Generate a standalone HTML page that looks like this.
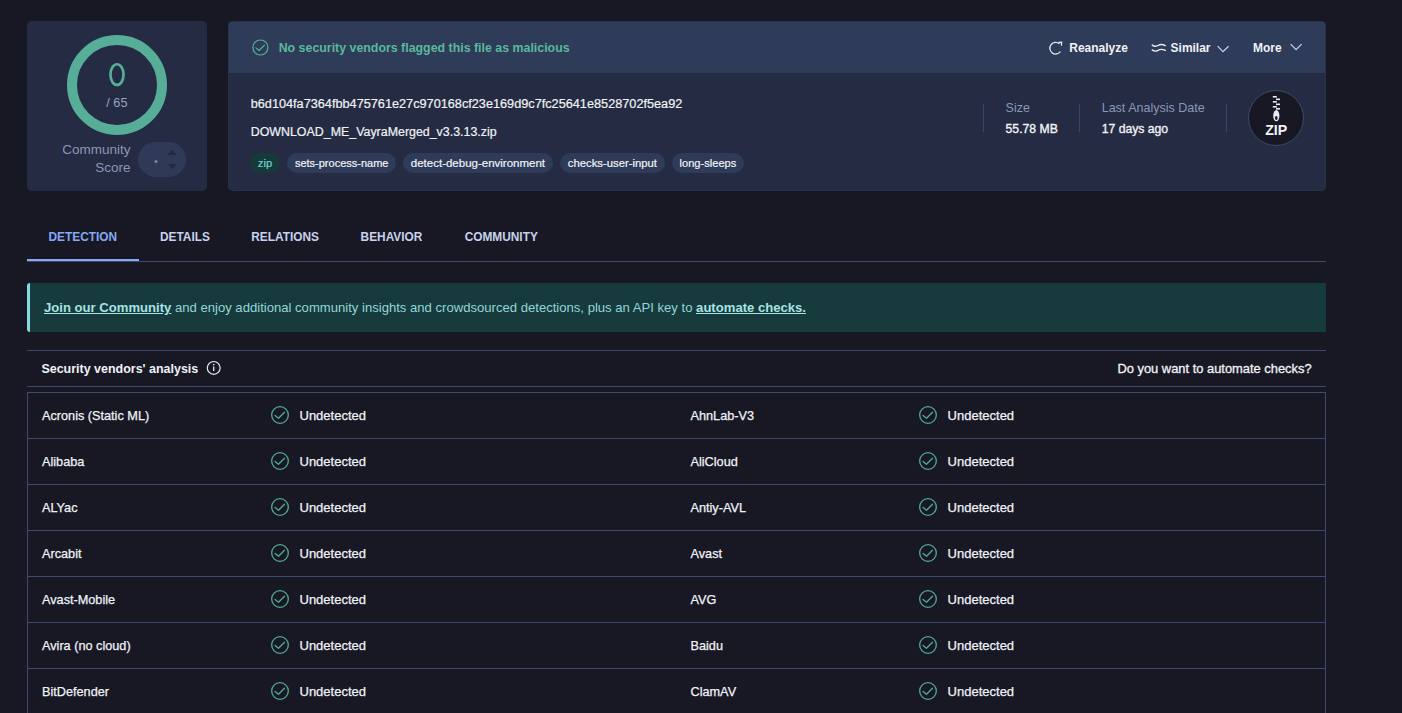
<!DOCTYPE html>
<html><head><meta charset="utf-8">
<style>
*{box-sizing:border-box;margin:0;padding:0}
html,body{width:1402px;height:713px;overflow:hidden;background:#181825;font-family:"Liberation Sans",sans-serif;color:#f0f2f6}
.t{position:absolute;white-space:nowrap}
.b{position:absolute}
svg.full{position:absolute;left:0;top:0}
</style></head><body>
<div class="b" style="left:27px;top:21px;width:180px;height:170px;background:#242b42;border-radius:5px"></div>
<div class="b" style="left:228px;top:21px;width:1098px;height:170px;background:#242b42;border-radius:5px;overflow:hidden;box-shadow:inset 0 0 0 1px #29324b"><div class="b" style="left:1px;top:1px;width:1096px;height:51px;background:#2e3b59"></div></div>
<div class="b" style="left:138px;top:142px;width:48px;height:35px;border-radius:17.5px;background:#2e3a58"></div>
<div class="b" style="left:27px;top:283px;width:1299px;height:49px;background:#173a3d;border-left:3px solid #86d9e0;border-radius:3px 0 0 3px"></div>
<div class="b" style="left:27px;top:261px;width:1299px;height:1px;background:#3d4a6b"></div>
<div class="b" style="left:27px;top:259px;width:112px;height:2px;background:#86a8f5"></div>
<div class="b" style="left:27px;top:350px;width:1299px;height:1px;background:#3d4a6b"></div>
<div class="b" style="left:27px;top:386px;width:1299px;height:1px;background:#3d4a6b"></div>
<div class="b" style="left:27px;top:392px;width:1299px;height:330px;border:1px solid #3d4a6b"></div>
<div class="b" style="left:27px;top:438px;width:1299px;height:1px;background:#3d4a6b"></div>
<div class="b" style="left:27px;top:484px;width:1299px;height:1px;background:#3d4a6b"></div>
<div class="b" style="left:27px;top:530px;width:1299px;height:1px;background:#3d4a6b"></div>
<div class="b" style="left:27px;top:576px;width:1299px;height:1px;background:#3d4a6b"></div>
<div class="b" style="left:27px;top:622px;width:1299px;height:1px;background:#3d4a6b"></div>
<div class="b" style="left:27px;top:668px;width:1299px;height:1px;background:#3d4a6b"></div>
<div class="b" style="left:27px;top:714px;width:1299px;height:1px;background:#3d4a6b"></div>
<svg class="full" width="1402" height="713" viewBox="0 0 1402 713"><circle cx="280" cy="415" r="8.32" fill="none" stroke="#52a892" stroke-width="1.35"/><polyline points="275.10,415.40 278.50,418.30 284.50,412.30" fill="none" stroke="#52a892" stroke-width="1.35" stroke-linecap="round" stroke-linejoin="round"/><circle cx="928" cy="415" r="8.32" fill="none" stroke="#52a892" stroke-width="1.35"/><polyline points="923.10,415.40 926.50,418.30 932.50,412.30" fill="none" stroke="#52a892" stroke-width="1.35" stroke-linecap="round" stroke-linejoin="round"/><circle cx="280" cy="461" r="8.32" fill="none" stroke="#52a892" stroke-width="1.35"/><polyline points="275.10,461.40 278.50,464.30 284.50,458.30" fill="none" stroke="#52a892" stroke-width="1.35" stroke-linecap="round" stroke-linejoin="round"/><circle cx="928" cy="461" r="8.32" fill="none" stroke="#52a892" stroke-width="1.35"/><polyline points="923.10,461.40 926.50,464.30 932.50,458.30" fill="none" stroke="#52a892" stroke-width="1.35" stroke-linecap="round" stroke-linejoin="round"/><circle cx="280" cy="507" r="8.32" fill="none" stroke="#52a892" stroke-width="1.35"/><polyline points="275.10,507.40 278.50,510.30 284.50,504.30" fill="none" stroke="#52a892" stroke-width="1.35" stroke-linecap="round" stroke-linejoin="round"/><circle cx="928" cy="507" r="8.32" fill="none" stroke="#52a892" stroke-width="1.35"/><polyline points="923.10,507.40 926.50,510.30 932.50,504.30" fill="none" stroke="#52a892" stroke-width="1.35" stroke-linecap="round" stroke-linejoin="round"/><circle cx="280" cy="553" r="8.32" fill="none" stroke="#52a892" stroke-width="1.35"/><polyline points="275.10,553.40 278.50,556.30 284.50,550.30" fill="none" stroke="#52a892" stroke-width="1.35" stroke-linecap="round" stroke-linejoin="round"/><circle cx="928" cy="553" r="8.32" fill="none" stroke="#52a892" stroke-width="1.35"/><polyline points="923.10,553.40 926.50,556.30 932.50,550.30" fill="none" stroke="#52a892" stroke-width="1.35" stroke-linecap="round" stroke-linejoin="round"/><circle cx="280" cy="599" r="8.32" fill="none" stroke="#52a892" stroke-width="1.35"/><polyline points="275.10,599.40 278.50,602.30 284.50,596.30" fill="none" stroke="#52a892" stroke-width="1.35" stroke-linecap="round" stroke-linejoin="round"/><circle cx="928" cy="599" r="8.32" fill="none" stroke="#52a892" stroke-width="1.35"/><polyline points="923.10,599.40 926.50,602.30 932.50,596.30" fill="none" stroke="#52a892" stroke-width="1.35" stroke-linecap="round" stroke-linejoin="round"/><circle cx="280" cy="645" r="8.32" fill="none" stroke="#52a892" stroke-width="1.35"/><polyline points="275.10,645.40 278.50,648.30 284.50,642.30" fill="none" stroke="#52a892" stroke-width="1.35" stroke-linecap="round" stroke-linejoin="round"/><circle cx="928" cy="645" r="8.32" fill="none" stroke="#52a892" stroke-width="1.35"/><polyline points="923.10,645.40 926.50,648.30 932.50,642.30" fill="none" stroke="#52a892" stroke-width="1.35" stroke-linecap="round" stroke-linejoin="round"/><circle cx="280" cy="691" r="8.32" fill="none" stroke="#52a892" stroke-width="1.35"/><polyline points="275.10,691.40 278.50,694.30 284.50,688.30" fill="none" stroke="#52a892" stroke-width="1.35" stroke-linecap="round" stroke-linejoin="round"/><circle cx="928" cy="691" r="8.32" fill="none" stroke="#52a892" stroke-width="1.35"/><polyline points="923.10,691.40 926.50,694.30 932.50,688.30" fill="none" stroke="#52a892" stroke-width="1.35" stroke-linecap="round" stroke-linejoin="round"/><circle cx="260.4" cy="47.5" r="7.50" fill="none" stroke="#55b496" stroke-width="1.2"/><polyline points="255.99,47.86 259.05,50.47 264.45,45.07" fill="none" stroke="#55b496" stroke-width="1.2" stroke-linecap="round" stroke-linejoin="round"/><circle cx="117" cy="85" r="45" fill="none" stroke="#56ae98" stroke-width="10"/><ellipse cx="117" cy="74.6" rx="6.55" ry="10.35" fill="none" stroke="#56ae98" stroke-width="2.7"/><circle cx="156" cy="161.5" r="1.6" fill="#7a869e"/><polygon points="167.5,155 177,155 172.25,150" fill="#222940"/><polygon points="167.5,164 177,164 172.25,169" fill="#222940"/><circle cx="213.7" cy="367.9" r="6.4" fill="none" stroke="#e8ebf2" stroke-width="1.2"/><line x1="213.7" y1="366.5" x2="213.7" y2="371" stroke="#e8ebf2" stroke-width="1.3"/><circle cx="213.7" cy="364.6" r="0.8" fill="#e8ebf2"/><path d="M1059.4,43.8 A5.8,5.8 0 1 0 1060.45,51.5" fill="none" stroke="#e8ebf2" stroke-width="1.3"/><polyline points="1058.6,42.5 1061.6,42.2 1061.4,45.6" fill="none" stroke="#e8ebf2" stroke-width="1.3" stroke-linejoin="miter"/><path d="M1152.2,45.1 C1154,46.6 1156.5,46.4 1158,45.5 C1159.5,44.6 1162,43.9 1165.3,45.6 M1152.2,49.9 C1154,51.4 1156.5,51.2 1158,50.3 C1159.5,49.4 1162,48.7 1165.3,50.4" fill="none" stroke="#e8ebf2" stroke-width="1.4" stroke-linecap="round"/><polyline points="1217.6,46.2 1223,51.6 1228.6,46.2" fill="none" stroke="#c8d2ec" stroke-width="1.2"/><polyline points="1290.6,44.2 1296.1,49.7 1301.6,44.2" fill="none" stroke="#c8d2ec" stroke-width="1.2"/><circle cx="1276" cy="118" r="27.5" fill="#181825" stroke="#3d4a6b" stroke-width="1"/><g fill="#e8ebf2"><rect x="1272.8" y="96" width="4" height="1.6"/><rect x="1276" y="98.5" width="4" height="1.6"/><rect x="1272.8" y="101" width="4" height="1.6"/><rect x="1276" y="103.5" width="4" height="1.6"/><rect x="1272.8" y="106" width="4" height="1.6"/><rect x="1276" y="108" width="4" height="1.6"/></g><ellipse cx="1276.3" cy="115.7" rx="3.1" ry="5.6" fill="#e8ebf2"/><ellipse cx="1276.3" cy="118" rx="1.3" ry="2.1" fill="#181825"/></svg>
<div class="t" style="left:106.3px;top:92.60px;font-size:12.7px;line-height:20px;font-weight:400;color:#9aa3c0;">/ 65</div>
<div class="t" style="left:-269.5px;width:400px;text-align:right;top:140.32px;font-size:13.5px;line-height:20px;font-weight:400;color:#8c97b6;">Community</div>
<div class="t" style="left:-269.5px;width:400px;text-align:right;top:158.32px;font-size:13.5px;line-height:20px;font-weight:400;color:#8c97b6;">Score</div>
<div class="t" style="left:278.7px;top:37.61px;font-size:12.38px;line-height:20px;font-weight:700;color:#5bb89c;">No security vendors flagged this file as malicious</div>
<div class="t" style="left:1069.3px;top:37.95px;font-size:11.98px;line-height:20px;font-weight:700;color:#f0f2f6;">Reanalyze</div>
<div class="t" style="left:1170.6px;top:37.85px;font-size:11.98px;line-height:20px;font-weight:700;color:#f0f2f6;">Similar</div>
<div class="t" style="left:1253px;top:37.85px;font-size:11.98px;line-height:20px;font-weight:700;color:#f0f2f6;">More</div>
<div class="t" style="left:250.7px;top:94.10px;font-size:12.71px;line-height:20px;font-weight:400;color:#f0f2f6;-webkit-text-stroke:0.2px #f0f2f6">b6d104fa7364fbb475761e27c970168cf23e169d9c7fc25641e8528702f5ea92</div>
<div class="t" style="left:250.7px;top:121.70px;font-size:12.41px;line-height:20px;font-weight:400;color:#f0f2f6;-webkit-text-stroke:0.2px #f0f2f6">DOWNLOAD_ME_VayraMerged_v3.3.13.zip</div>
<div class="t" style="left:1005.6px;top:97.57px;font-size:12.5px;line-height:20px;font-weight:400;color:#8a97b8;">Size</div>
<div class="t" style="left:1005.6px;top:118.77px;font-size:12.2px;line-height:20px;font-weight:400;color:#f0f2f6;-webkit-text-stroke:0.35px #f0f2f6">55.78 MB</div>
<div class="t" style="left:1101.7px;top:97.56px;font-size:12.52px;line-height:20px;font-weight:400;color:#8a97b8;">Last Analysis Date</div>
<div class="t" style="left:1101.7px;top:118.77px;font-size:12.2px;line-height:20px;font-weight:400;color:#f0f2f6;-webkit-text-stroke:0.35px #f0f2f6">17 days ago</div>
<div class="b" style="left:983px;top:104px;width:1px;height:28px;background:#3a4562"></div>
<div class="b" style="left:1079px;top:104px;width:1px;height:28px;background:#3a4562"></div>
<div class="b" style="left:1226px;top:104px;width:1px;height:28px;background:#3a4562"></div>
<div class="t" style="left:250px;top:153px;width:30.0px;height:20px;border-radius:10px;background:#163a39;color:#72d2cf;font-size:11.3px;line-height:20px;text-align:center;-webkit-text-stroke:0.2px #72d2cf">zip</div>
<div class="t" style="left:287.4px;top:153px;width:108.6px;height:20px;border-radius:10px;background:#2e3b59;color:#f0f2f6;font-size:11.0px;line-height:20px;text-align:center;-webkit-text-stroke:0.2px #f0f2f6">sets-process-name</div>
<div class="t" style="left:402.8px;top:153px;width:150.3px;height:20px;border-radius:10px;background:#2e3b59;color:#f0f2f6;font-size:11.5px;line-height:20px;text-align:center;-webkit-text-stroke:0.2px #f0f2f6">detect-debug-environment</div>
<div class="t" style="left:560px;top:153px;width:104.8px;height:20px;border-radius:10px;background:#2e3b59;color:#f0f2f6;font-size:11.3px;line-height:20px;text-align:center;-webkit-text-stroke:0.2px #f0f2f6">checks-user-input</div>
<div class="t" style="left:672px;top:153px;width:71.9px;height:20px;border-radius:10px;background:#2e3b59;color:#f0f2f6;font-size:11.1px;line-height:20px;text-align:center;-webkit-text-stroke:0.2px #f0f2f6">long-sleeps</div>
<div class="t" style="left:48.5px;top:226.89px;font-size:11.86px;line-height:20px;font-weight:700;color:#86a8f5;">DETECTION</div>
<div class="t" style="left:160px;top:226.89px;font-size:11.86px;line-height:20px;font-weight:700;color:#c8d2ec;">DETAILS</div>
<div class="t" style="left:251.3px;top:226.89px;font-size:11.86px;line-height:20px;font-weight:700;color:#c8d2ec;">RELATIONS</div>
<div class="t" style="left:360.6px;top:226.89px;font-size:11.86px;line-height:20px;font-weight:700;color:#c8d2ec;">BEHAVIOR</div>
<div class="t" style="left:464.7px;top:226.89px;font-size:11.86px;line-height:20px;font-weight:700;color:#c8d2ec;">COMMUNITY</div>
<div class="t" style="left:44px;top:297.66px;font-size:13.1px;line-height:20px;font-weight:400;color:#92d6d8;"><b style="text-decoration:underline;color:#a6e3e3">Join our Community</b> and enjoy additional community insights and crowdsourced detections, plus an API key to <b style="text-decoration:underline;color:#a6e3e3">automate checks.</b></div>
<div class="t" style="left:41.4px;top:358.78px;font-size:12.48px;line-height:20px;font-weight:700;color:#f0f2f6;">Security vendors' analysis</div>
<div class="t" style="left:911.5999999999999px;width:400px;text-align:right;top:358.53px;font-size:12.9px;line-height:20px;font-weight:400;color:#f0f2f6;-webkit-text-stroke:0.3px #f0f2f6">Do you want to automate checks?</div>
<div class="t" style="left:42px;top:405.90px;font-size:12.7px;line-height:20px;font-weight:400;color:#f0f2f6;-webkit-text-stroke:0.25px #f0f2f6">Acronis (Static ML)</div>
<div class="t" style="left:690.5px;top:405.90px;font-size:12.7px;line-height:20px;font-weight:400;color:#f0f2f6;-webkit-text-stroke:0.25px #f0f2f6">AhnLab-V3</div>
<div class="t" style="left:299.5px;top:405.80px;font-size:13.0px;line-height:20px;font-weight:400;color:#f0f2f6;-webkit-text-stroke:0.25px #f0f2f6">Undetected</div>
<div class="t" style="left:947.6px;top:405.80px;font-size:13.0px;line-height:20px;font-weight:400;color:#f0f2f6;-webkit-text-stroke:0.25px #f0f2f6">Undetected</div>
<div class="t" style="left:42px;top:451.90px;font-size:12.7px;line-height:20px;font-weight:400;color:#f0f2f6;-webkit-text-stroke:0.25px #f0f2f6">Alibaba</div>
<div class="t" style="left:690.5px;top:451.90px;font-size:12.7px;line-height:20px;font-weight:400;color:#f0f2f6;-webkit-text-stroke:0.25px #f0f2f6">AliCloud</div>
<div class="t" style="left:299.5px;top:451.80px;font-size:13.0px;line-height:20px;font-weight:400;color:#f0f2f6;-webkit-text-stroke:0.25px #f0f2f6">Undetected</div>
<div class="t" style="left:947.6px;top:451.80px;font-size:13.0px;line-height:20px;font-weight:400;color:#f0f2f6;-webkit-text-stroke:0.25px #f0f2f6">Undetected</div>
<div class="t" style="left:42px;top:497.90px;font-size:12.7px;line-height:20px;font-weight:400;color:#f0f2f6;-webkit-text-stroke:0.25px #f0f2f6">ALYac</div>
<div class="t" style="left:690.5px;top:497.90px;font-size:12.7px;line-height:20px;font-weight:400;color:#f0f2f6;-webkit-text-stroke:0.25px #f0f2f6">Antiy-AVL</div>
<div class="t" style="left:299.5px;top:497.80px;font-size:13.0px;line-height:20px;font-weight:400;color:#f0f2f6;-webkit-text-stroke:0.25px #f0f2f6">Undetected</div>
<div class="t" style="left:947.6px;top:497.80px;font-size:13.0px;line-height:20px;font-weight:400;color:#f0f2f6;-webkit-text-stroke:0.25px #f0f2f6">Undetected</div>
<div class="t" style="left:42px;top:543.90px;font-size:12.7px;line-height:20px;font-weight:400;color:#f0f2f6;-webkit-text-stroke:0.25px #f0f2f6">Arcabit</div>
<div class="t" style="left:690.5px;top:543.90px;font-size:12.7px;line-height:20px;font-weight:400;color:#f0f2f6;-webkit-text-stroke:0.25px #f0f2f6">Avast</div>
<div class="t" style="left:299.5px;top:543.80px;font-size:13.0px;line-height:20px;font-weight:400;color:#f0f2f6;-webkit-text-stroke:0.25px #f0f2f6">Undetected</div>
<div class="t" style="left:947.6px;top:543.80px;font-size:13.0px;line-height:20px;font-weight:400;color:#f0f2f6;-webkit-text-stroke:0.25px #f0f2f6">Undetected</div>
<div class="t" style="left:42px;top:589.90px;font-size:12.7px;line-height:20px;font-weight:400;color:#f0f2f6;-webkit-text-stroke:0.25px #f0f2f6">Avast-Mobile</div>
<div class="t" style="left:690.5px;top:589.90px;font-size:12.7px;line-height:20px;font-weight:400;color:#f0f2f6;-webkit-text-stroke:0.25px #f0f2f6">AVG</div>
<div class="t" style="left:299.5px;top:589.80px;font-size:13.0px;line-height:20px;font-weight:400;color:#f0f2f6;-webkit-text-stroke:0.25px #f0f2f6">Undetected</div>
<div class="t" style="left:947.6px;top:589.80px;font-size:13.0px;line-height:20px;font-weight:400;color:#f0f2f6;-webkit-text-stroke:0.25px #f0f2f6">Undetected</div>
<div class="t" style="left:42px;top:635.90px;font-size:12.7px;line-height:20px;font-weight:400;color:#f0f2f6;-webkit-text-stroke:0.25px #f0f2f6">Avira (no cloud)</div>
<div class="t" style="left:690.5px;top:635.90px;font-size:12.7px;line-height:20px;font-weight:400;color:#f0f2f6;-webkit-text-stroke:0.25px #f0f2f6">Baidu</div>
<div class="t" style="left:299.5px;top:635.80px;font-size:13.0px;line-height:20px;font-weight:400;color:#f0f2f6;-webkit-text-stroke:0.25px #f0f2f6">Undetected</div>
<div class="t" style="left:947.6px;top:635.80px;font-size:13.0px;line-height:20px;font-weight:400;color:#f0f2f6;-webkit-text-stroke:0.25px #f0f2f6">Undetected</div>
<div class="t" style="left:42px;top:681.90px;font-size:12.7px;line-height:20px;font-weight:400;color:#f0f2f6;-webkit-text-stroke:0.25px #f0f2f6">BitDefender</div>
<div class="t" style="left:690.5px;top:681.90px;font-size:12.7px;line-height:20px;font-weight:400;color:#f0f2f6;-webkit-text-stroke:0.25px #f0f2f6">ClamAV</div>
<div class="t" style="left:299.5px;top:681.80px;font-size:13.0px;line-height:20px;font-weight:400;color:#f0f2f6;-webkit-text-stroke:0.25px #f0f2f6">Undetected</div>
<div class="t" style="left:947.6px;top:681.80px;font-size:13.0px;line-height:20px;font-weight:400;color:#f0f2f6;-webkit-text-stroke:0.25px #f0f2f6">Undetected</div>
<div class="t" style="left:976.2px;width:600px;text-align:center;top:120.08px;font-size:14.2px;line-height:20px;font-weight:700;color:#f2f3f6;">ZIP</div>
</body></html>
